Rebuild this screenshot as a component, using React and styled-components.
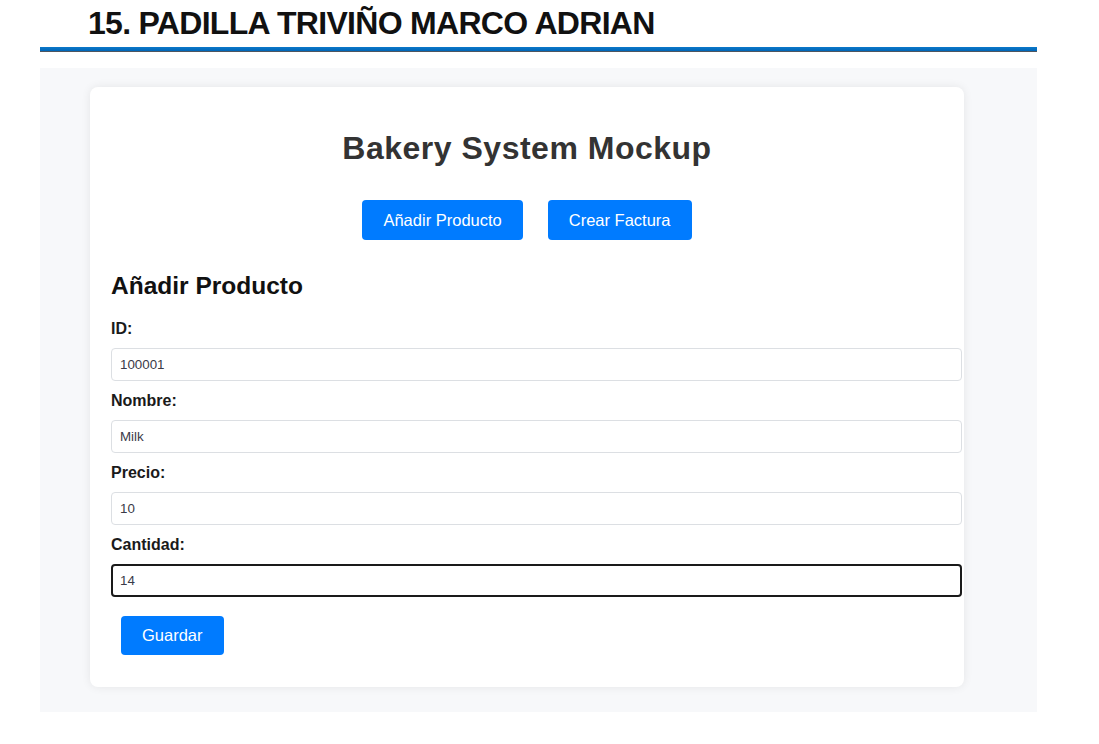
import React from 'react';
import styled, { createGlobalStyle } from 'styled-components';

const GlobalStyle = createGlobalStyle`
  body {
    margin: 0;
    background: #ffffff;
    font-family: "Liberation Sans", Arial, sans-serif;
  }
`;

const DocTitle = styled.h3`
  margin: 0;
  padding: 5px 0 0 88px;
  font-size: 32px;
  line-height: 36px;
  font-weight: bold;
  letter-spacing: -0.7px;
  color: #111;
`;

const Rule = styled.div`
  margin: 6px 62px 0 40px;
  height: 4px;
  background: linear-gradient(180deg, #0b78c9 0%, #0066b8 100%);
  border-bottom: 1px solid #4d5660;
`;

const Shot = styled.div`
  margin: 16px 62px 0 40px;
  padding: 19px 73px 25px 50px;
  background: #f7f8fa;
`;

const Card = styled.div`
  width: 874px;
  box-sizing: border-box;
  padding: 20px 21px;
  background: #fff;
  border-radius: 8px;
  box-shadow: 0 0 10px rgba(0, 0, 0, 0.08);
`;

const Heading = styled.h1`
  margin: 23px 0 0;
  font-size: 32px;
  line-height: 37px;
  letter-spacing: 0.5px;
  text-align: center;
  color: #333;
`;

const Nav = styled.div`
  display: flex;
  justify-content: center;
  gap: 25px;
  margin-top: 33px;
`;

const Button = styled.button`
  height: ${p => p.$h || 40}px;
  padding: 0 ${p => p.$px || 21}px;
  margin-left: ${p => p.$ml || 0}px;
  border: none;
  border-radius: 4px;
  background: #007bff;
  color: #fff;
  font-family: "Liberation Sans", Arial, sans-serif;
  font-size: 16.5px;
  cursor: pointer;
`;

const SubHeading = styled.h2`
  margin: 32px 0 0;
  font-size: 24.5px;
  line-height: 27px;
  color: #111;
`;

const Form = styled.form`
  margin-top: 21px;
  display: flex;
  flex-direction: column;
  align-items: flex-start;
`;

const Label = styled.label`
  display: block;
  margin-top: ${p => (p.$first ? 0 : 11)}px;
  font-size: 16px;
  line-height: 18px;
  font-weight: bold;
  color: #1a1a1a;
`;

const Input = styled.input`
  box-sizing: border-box;
  width: calc(100% + 19px);
  height: 33px;
  margin-top: 10px;
  padding: 0 ${p => (p.$focus ? 7 : 8)}px;
  border: ${p => (p.$focus ? '2px solid #1a1a1a' : '1px solid #dcdfe3')};
  border-radius: 4px;
  font-family: "Liberation Sans", Arial, sans-serif;
  font-size: 13.33px;
  color: #3a3a48;
  outline: none;
  background: #fff;
`;

const Actions = styled.div`
  margin-top: 19px;
  margin-bottom: 12px;
`;

const fields = [
  { id: 'id', label: 'ID:', value: '100001' },
  { id: 'nombre', label: 'Nombre:', value: 'Milk' },
  { id: 'precio', label: 'Precio:', value: '10' },
  { id: 'cantidad', label: 'Cantidad:', value: '14', focus: true },
];

export default function App() {
  return (
    <>
      <GlobalStyle />
      <DocTitle>15. PADILLA TRIVIÑO MARCO ADRIAN</DocTitle>
      <Rule />
      <Shot>
        <Card>
          <Heading>Bakery System Mockup</Heading>
          <Nav>
            <Button>Añadir Producto</Button>
            <Button>Crear Factura</Button>
          </Nav>
          <SubHeading>Añadir Producto</SubHeading>
          <Form onSubmit={e => e.preventDefault()}>
            {fields.map((f, i) => (
              <React.Fragment key={f.id}>
                <Label htmlFor={f.id} $first={i === 0}>{f.label}</Label>
                <Input id={f.id} defaultValue={f.value} $focus={f.focus} />
              </React.Fragment>
            ))}
            <Actions>
              <Button type="submit" $h={39} $px={21} $ml={10}>Guardar</Button>
            </Actions>
          </Form>
        </Card>
      </Shot>
    </>
  );
}
